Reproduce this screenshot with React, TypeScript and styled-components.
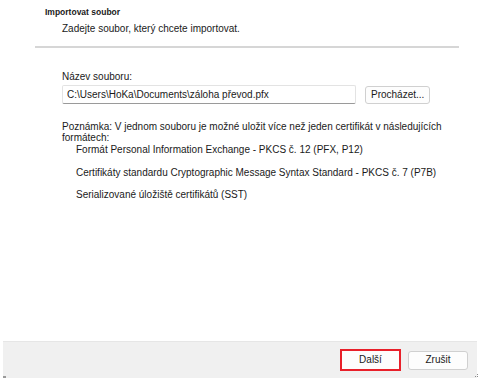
import React from 'react';
import styled, { createGlobalStyle } from 'styled-components';

const GlobalStyle = createGlobalStyle`
  html, body {
    margin: 0;
    padding: 0;
    background: #ffffff;
  }
  body {
    font-family: "Liberation Sans", Arial, sans-serif;
    color: #1a1a1a;
  }
`;

const FORMATS = [
  'Formát Personal Information Exchange - PKCS č. 12 (PFX, P12)',
  'Certifikáty standardu Cryptographic Message Syntax Standard - PKCS č. 7 (P7B)',
  'Serializované úložiště certifikátů (SST)',
];

const App: React.FC = () => (
  <>
    <GlobalStyle />
    <Window>
      <Header>
        <Title>Importovat soubor</Title>
        <Subtitle>Zadejte soubor, který chcete importovat.</Subtitle>
      </Header>
      <Separator />
      <Body>
        <Label>Název souboru:</Label>
        <FileRow>
          <PathInput readOnly value="C:\Users\HoKa\Documents\záloha převod.pfx" />
          <Button>Procházet...</Button>
        </FileRow>
        <Note>
          Poznámka: V jednom souboru je možné uložit více než jeden certifikát v následujících
          formátech:
        </Note>
        <FormatList>
          {FORMATS.map(f => (
            <FormatItem key={f}>{f}</FormatItem>
          ))}
        </FormatList>
      </Body>
      <Footer>
        <Button $primary $wide>Další</Button>
        <Button $wide>Zrušit</Button>
        <Grip viewBox="0 0 4 4">
          <rect x="3" y="0" width="1" height="1" fill="#8a8a8a" />
          <rect x="1" y="2" width="1" height="1" fill="#8a8a8a" />
          <rect x="3" y="2" width="1" height="1" fill="#8a8a8a" />
        </Grip>
        <LeftMark />
      </Footer>
    </Window>
  </>
);

export default App;

const Window = styled.div`
  width: 480px;
  height: 382px;
  display: flex;
  flex-direction: column;
  background: #ffffff;
  overflow: hidden;
`;

const Header = styled.div`
  padding: 6px 0 0 45px;
  height: 40px;
  box-sizing: border-box;
`;

const Title = styled.div`
  font-size: 8.5px;
  font-weight: bold;
  line-height: 12px;
`;

const Subtitle = styled.div`
  margin: 4px 0 0 17px;
  font-size: 10px;
  line-height: 13px;
`;

const Separator = styled.div`
  margin: 6px 21px 0 35px;
  height: 2px;
  background: #d6d6d6;
`;

const Body = styled.div`
  flex: 1;
  padding: 22px 21px 0 62px;
  font-size: 10px;
`;

const Label = styled.div`
  line-height: 13px;
`;

const FileRow = styled.div`
  display: flex;
  align-items: center;
  gap: 9px;
  margin-top: 2px;
`;

const PathInput = styled.input`
  width: 294px;
  height: 19px;
  box-sizing: border-box;
  padding: 0 4px;
  border: 1px solid #e3e3e3;
  border-bottom-color: #9a9a9a;
  border-radius: 2px;
  font-family: inherit;
  font-size: 10px;
  color: #1a1a1a;
  outline: none;
`;

const Button = styled.button<{ $primary?: boolean; $wide?: boolean }>`
  height: ${p => (p.$primary ? '22px' : p.$wide ? '19px' : '18px')};
  width: ${p => (p.$primary ? '61px' : p.$wide ? '60px' : 'auto')};
  padding: 0 5px;
  box-sizing: border-box;
  background: #fdfdfd;
  border: ${p => (p.$primary ? '2px solid #e8202a' : '1px solid #d0d0d0')};
  border-radius: ${p => (p.$primary ? '0' : '3px')};
  font-family: inherit;
  font-size: 10px;
  color: #1a1a1a;
  line-height: 1;
`;

const Note = styled.div`
  margin-top: 17px;
  line-height: 11px;
  width: 392px;
`;

const FormatList = styled.div`
  display: flex;
  flex-direction: column;
  gap: 9px;
  margin: 0 0 0 14px;
`;

const FormatItem = styled.div`
  line-height: 13.5px;
`;

const Footer = styled.div`
  position: relative;
  margin: 0 3px 4px 3px;
  height: 36px;
  background: #f0f0f0;
  border-top: 1px solid #e6e6e6;
  display: flex;
  align-items: center;
  justify-content: flex-end;
  gap: 7px;
  padding-right: 9px;
`;

const Grip = styled.svg`
  position: absolute;
  right: -1px;
  bottom: 0;
  width: 4px;
  height: 4px;
`;

const LeftMark = styled.div`
  position: absolute;
  left: 0;
  bottom: 0;
  width: 3px;
  height: 2px;
  background: #9a9a9a;
`;
